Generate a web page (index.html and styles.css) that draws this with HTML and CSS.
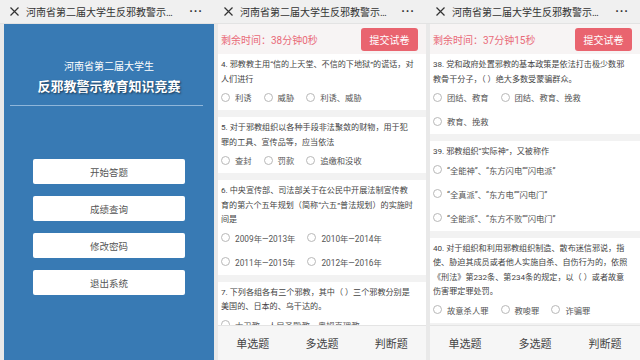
FILE: index.html
```
<!DOCTYPE html>
<html>
<head>
  <meta charset="utf-8">
  <title>反邪教警示教育知识竞赛</title>
  <link rel="stylesheet" href="styles.css">
</head>
<body>
  <div class="shots">

    <!-- home screen -->
    <section class="phone home">
      <header class="topbar">
        <svg class="close" width="9" height="9" viewBox="0 0 9 9"><path d="M0.5 0.5L8.5 8.5M8.5 0.5L0.5 8.5" stroke="#333" stroke-width="1.2" fill="none"/></svg>
        <span class="title">河南省第二届大学生反邪教警示…</span>
        <span class="more">···</span>
      </header>
      <div class="screen">
        <p class="sub">河南省第二届大学生</p>
        <h1>反邪教警示教育知识竞赛</h1>
        <hr class="rule">
        <nav class="menu">
          <button>开始答题</button>
          <button>成绩查询</button>
          <button>修改密码</button>
          <button>退出系统</button>
        </nav>
      </div>
    </section>

    <!-- quiz, page 1 -->
    <section class="phone quiz">
      <header class="topbar">
        <svg class="close" width="9" height="9" viewBox="0 0 9 9"><path d="M0.5 0.5L8.5 8.5M8.5 0.5L0.5 8.5" stroke="#333" stroke-width="1.2" fill="none"/></svg>
        <span class="title">河南省第二届大学生反邪教警示…</span>
        <span class="more">···</span>
      </header>
      <div class="screen">
        <div class="timer">
          <span>剩余时间：38分钟0秒</span>
          <button class="submit">提交试卷</button>
        </div>
        <div class="list">
          <div class="q">
            <p>4. 邪教教主用“信的上天堂、不信的下地狱”的谎话，对<br>人们进行</p>
            <ul class="opts">
              <li><i class="radio"></i>利诱</li>
              <li><i class="radio"></i>威胁</li>
              <li><i class="radio"></i>利诱、威胁</li>
            </ul>
          </div>
          <div class="q">
            <p>5. 对于邪教组织以各种手段非法聚敛的财物，用于犯<br>罪的工具、宣传品等，应当依法</p>
            <ul class="opts">
              <li><i class="radio"></i>查封</li>
              <li><i class="radio"></i>罚款</li>
              <li><i class="radio"></i>追缴和没收</li>
            </ul>
          </div>
          <div class="q">
            <p>6. 中央宣传部、司法部关于在公民中开展法制宣传教<br>育的第六个五年规划（简称“六五”普法规划）的实施时<br>间是</p>
            <ul class="opts">
              <li><i class="radio"></i>2009年—2013年</li>
              <li><i class="radio"></i>2010年—2014年</li>
              <li><i class="radio"></i>2011年—2015年</li>
              <li><i class="radio"></i>2012年—2016年</li>
            </ul>
          </div>
          <div class="q">
            <p>7. 下列各组各有三个邪教，其中（ ）三个邪教分别是<br>美国的、日本的、乌干达的。</p>
            <ul class="opts">
              <li><i class="radio"></i>大卫教、人民圣殿教、奥姆真理教</li>
            </ul>
          </div>
        </div>
        <footer class="tabs">
          <a>单选题</a>
          <a>多选题</a>
          <a>判断题</a>
        </footer>
      </div>
    </section>

    <!-- quiz, page 2 -->
    <section class="phone quiz">
      <header class="topbar">
        <svg class="close" width="9" height="9" viewBox="0 0 9 9"><path d="M0.5 0.5L8.5 8.5M8.5 0.5L0.5 8.5" stroke="#333" stroke-width="1.2" fill="none"/></svg>
        <span class="title">河南省第二届大学生反邪教警示…</span>
        <span class="more">···</span>
      </header>
      <div class="screen">
        <div class="timer">
          <span>剩余时间：37分钟15秒</span>
          <button class="submit">提交试卷</button>
        </div>
        <div class="list">
          <div class="q">
            <p>38. 党和政府处置邪教的基本政策是依法打击极少数邪<br>教骨干分子，（ ）绝大多数受蒙骗群众。</p>
            <ul class="opts">
              <li><i class="radio"></i>团结、教育</li>
              <li><i class="radio"></i>团结、教育、挽救</li>
              <li><i class="radio"></i>教育、挽救</li>
            </ul>
          </div>
          <div class="q">
            <p>39. 邪教组织“实际神”，又被称作</p>
            <ul class="opts">
              <li><i class="radio"></i>“全能神”、“东方闪电”“闪电派”</li>
              <li><i class="radio"></i>“全真派”、“东方电”“闪电门”</li>
              <li><i class="radio"></i>“全能派”、“东方不败”“闪电门”</li>
            </ul>
          </div>
          <div class="q">
            <p>40. 对于组织和利用邪教组织制造、散布迷信邪说，指<br>使、胁迫其成员或者他人实施自杀、自伤行为的，依照<br>《刑法》第232条、第234条的规定，以（ ）或者故意<br>伤害罪定罪处罚。</p>
            <ul class="opts">
              <li><i class="radio"></i>故意杀人罪</li>
              <li><i class="radio"></i>教唆罪</li>
              <li><i class="radio"></i>诈骗罪</li>
            </ul>
          </div>
        </div>
        <footer class="tabs">
          <a>单选题</a>
          <a>多选题</a>
          <a>判断题</a>
        </footer>
      </div>
    </section>

  </div>
</body>
</html>
```

FILE: styles.css
```
* {
  box-sizing: border-box;
  margin: 0;
  padding: 0;
}
body {
  width: 640px;
  height: 360px;
  overflow: hidden;
  background: #fff;
  font-family: Roboto, "Noto Sans CJK SC", sans-serif;
}
.shots {
  display: flex;
  height: 360px;
}
.phone {
  display: flex;
  flex-direction: column;
  width: 212px;
  height: 360px;
  overflow: hidden;
  background: #e9e9e9;
}
.home,
.phone:last-child {
  width: 214px;
}

/* top bar */
.topbar {
  flex: none;
  display: flex;
  align-items: center;
  height: 24px;
  padding: 0 11px 0 10px;
  background: #f0f0f0;
  border-bottom: 1px solid #e3e3e3;
}
.close {
  flex: none;
  margin-right: 7px;
}
.title {
  font-size: 10px;
  color: #333;
  white-space: nowrap;
}
.more {
  margin-left: auto;
  font-size: 12px;
  font-weight: bold;
  letter-spacing: 1px;
  color: #333;
}

.screen {
  flex: 1;
  min-height: 0;
  margin-left: 4px;
  display: flex;
  flex-direction: column;
}

/* home */
.home .screen {
  background: #387ab4;
  padding-top: 36px;
  text-align: center;
  color: #fff;
}
.sub {
  font-size: 10px;
  line-height: 14px;
}
.home h1 {
  margin-top: 4px;
  font-size: 13px;
  line-height: 18px;
  font-weight: bold;
  text-shadow: 1px 1px 2px rgba(0, 0, 0, 0.55);
}
.rule {
  height: 1px;
  border: 0;
  margin: 9px 11px 0 6px;
  background: #8fb6da;
}
.menu {
  display: flex;
  flex-direction: column;
  align-items: center;
  gap: 12px;
  margin-top: 53px;
}
.menu button {
  width: 152px;
  height: 25px;
  border: none;
  border-radius: 2px;
  background: #fff;
  color: #555;
  font-family: inherit;
  font-size: 9.5px;
}

/* quiz */
.quiz .screen {
  background: #f2f2f2;
}
.timer {
  flex: none;
  display: flex;
  align-items: center;
  justify-content: space-between;
  height: 30px;
  padding: 0 8px 0 3px;
  background: #f7f4f4;
}
.timer span {
  font-size: 10px;
  color: #e96a78;
}
.submit {
  width: 57px;
  height: 23px;
  border: none;
  border-radius: 3px;
  background: #e9646f;
  color: #fff;
  font-family: inherit;
  font-size: 10px;
}
.list {
  flex: 1;
  min-height: 0;
  overflow: hidden;
}
.q {
  padding: 3px 3px;
  margin-bottom: 7px;
  background: #fff;
}
.q p {
  font-size: 8.1px;
  line-height: 14.5px;
  color: #444;
  white-space: nowrap;
}
.opts {
  list-style: none;
  display: flex;
  flex-wrap: wrap;
  column-gap: 12px;
  row-gap: 4px;
  margin-top: 1px;
}
.opts li {
  display: flex;
  align-items: center;
  height: 20px;
  font-size: 8.3px;
  color: #555;
}
.radio {
  flex: none;
  width: 9px;
  height: 9px;
  margin-right: 5px;
  border: 1px solid #b8b8b8;
  border-radius: 50%;
  background: #fff;
}
.tabs {
  flex: none;
  display: flex;
  height: 35px;
  background: #f6f6f6;
  border-top: 1px solid #e4e4e4;
}
.tabs a {
  flex: 1;
  display: flex;
  align-items: center;
  justify-content: center;
  font-size: 11px;
  color: #444;
}
```
